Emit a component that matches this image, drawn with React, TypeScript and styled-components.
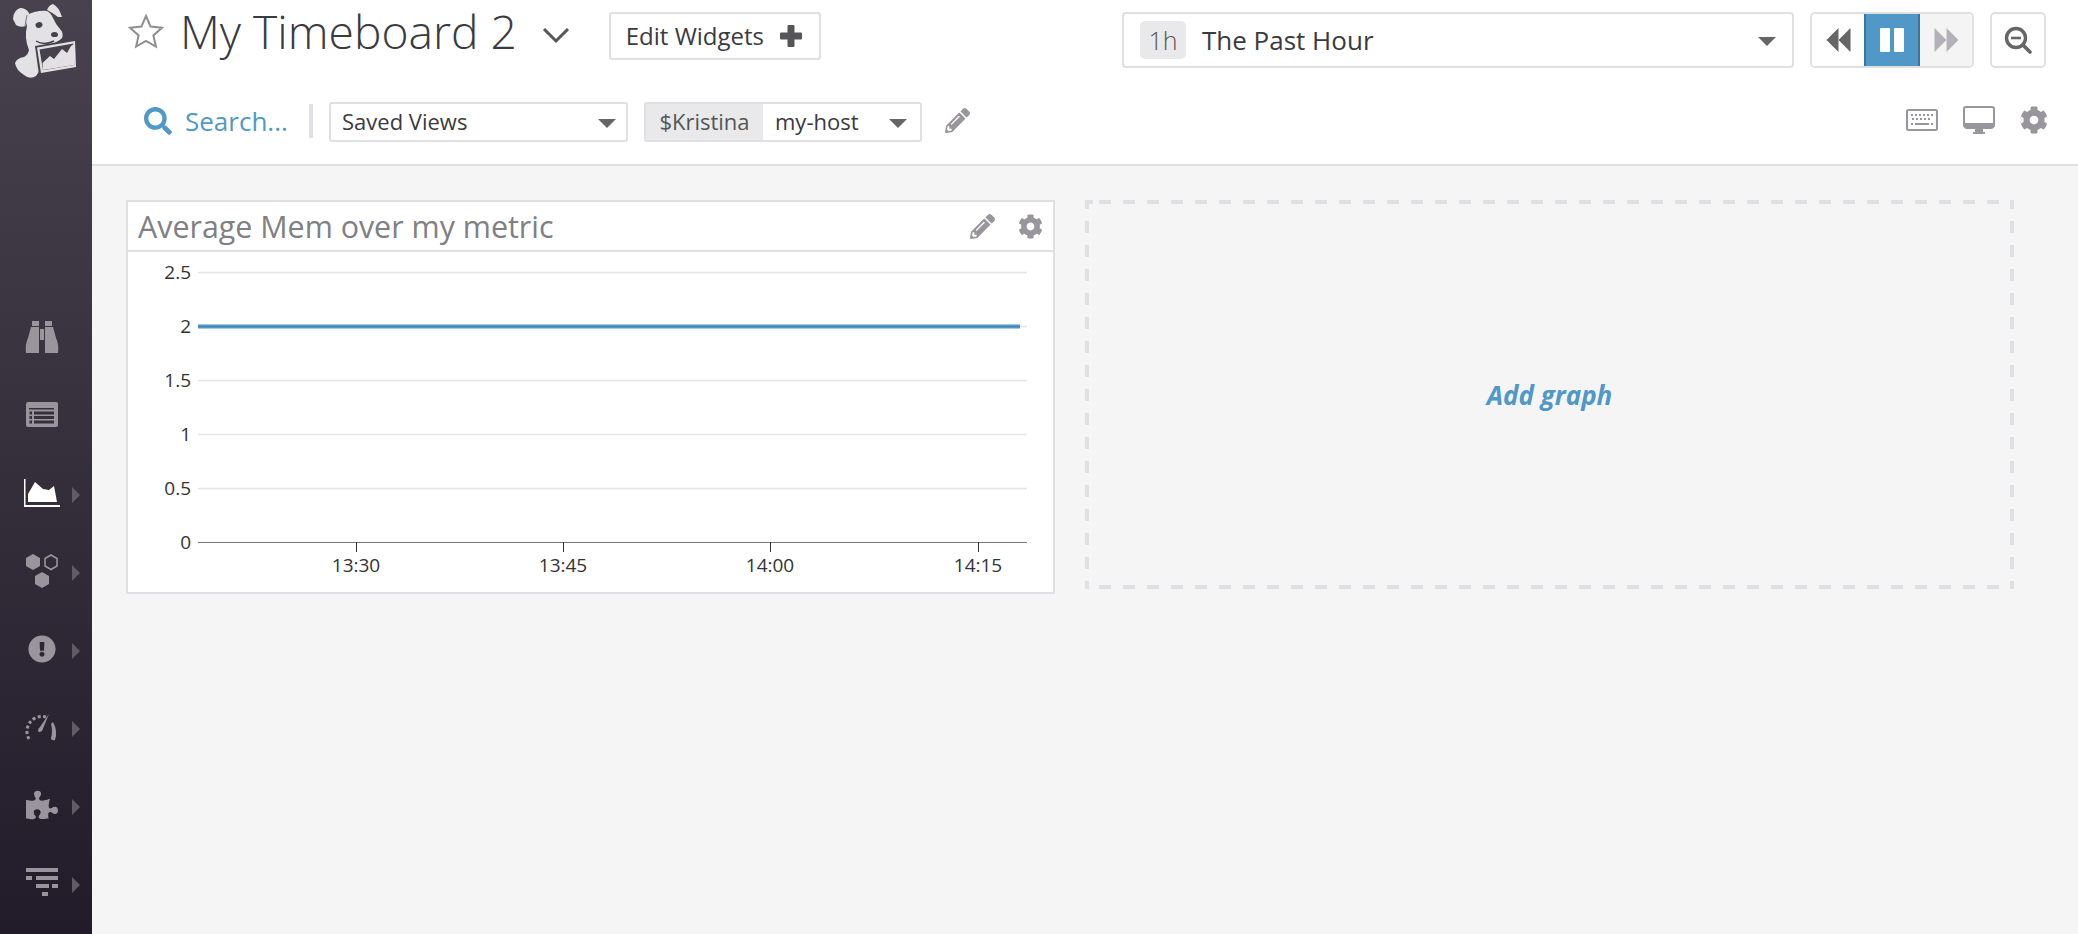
import { ReactNode } from 'react'
import styled, { createGlobalStyle } from 'styled-components'
import { FaCog, FaPencilAlt, FaPuzzlePiece, FaExclamationCircle, FaSearch } from 'react-icons/fa'

const BLUE = '#4f98c8'
const LINE = '#e0e0e4'

function DogLogo() {
  return (
    <svg width="92" height="100" viewBox="0 0 92 100">
      {/* head, chest and paw */}
      <path
        fill="#e2e2e4"
        d="M27 15 Q37 10 47 11 Q51 13 53 18 Q56 25 60 29 Q64 33 62 38 Q58 42 51 44 L37 48 L40 70 L36 76 Q30 80 24 75 Q16 70 15 63 Q17 58 24 57 Q28 55 29 50 Q24 38 27 26 Z"
      />
      {/* floppy ears */}
      <path fill="#e2e2e4" d="M13 19 Q13 11 20 8 Q26 8 29 13 Q28 20 26 26 Q20 28 16 25 Z" />
      <path fill="#e2e2e4" d="M47 10 Q49 5 53 4 Q59 7 62 17 L58 17 Q53 13 47 10 Z" />
      <path d="M27 15 L25 26" fill="none" stroke="#46414d" strokeWidth="0.7" />
      <ellipse cx="39" cy="25" rx="3.5" ry="2.8" fill="#46414d" transform="rotate(-20 39 25)" />
      <ellipse cx="54.5" cy="34.5" rx="3.5" ry="2.6" fill="#46414d" />
      <path d="M36 41 Q44 46 54 41" fill="none" stroke="#46414d" strokeWidth="1.4" />
      {/* the little chart it holds */}
      <path fill="#46414d" d="M35 46 L77 39 L78 69 L39 75 Z" />
      <path fill="#e2e2e4" d="M37 47.5 L75 41 L76 67 L41 73 Z" />
      <path fill="#46414d" d="M39.5 49.5 L73.5 43.5 L74.2 65 L43 70.2 Z" />
      <path fill="#e2e2e4" d="M43 70 L42.5 63 L50 56 L54 59 L62 49 L67 53 L71 46 L74 44 L74.2 65 Z" />
    </svg>
  )
}

const navIcons: { icon: ReactNode; arrow: boolean }[] = [
  {
    arrow: false,
    icon: (
      <svg width="34" height="34" viewBox="0 0 34 34" fill="#98969c">
        <rect x="7" y="1" width="7" height="5" />
        <rect x="20" y="1" width="7" height="5" />
        <path d="M6 7 H14 V33 H1 Q0 24 3 18 Z" />
        <path d="M20 7 H28 L31 18 Q34 24 33 33 H20 Z" />
        <rect x="15" y="9" width="4" height="11" />
      </svg>
    ),
  },
  {
    arrow: false,
    icon: (
      <svg width="34" height="28" viewBox="0 0 34 28">
        <rect x="1" y="1" width="32" height="25" rx="2" fill="#98969c" />
        <g fill="#36303e">
          <rect x="4" y="7" width="25" height="1.5" />
          <rect x="9" y="10.5" width="20" height="3" />
          <rect x="9" y="15" width="20" height="3" />
          <rect x="9" y="19.5" width="20" height="3" />
          <rect x="4.5" y="10.5" width="2.5" height="3" />
          <rect x="4.5" y="15" width="2.5" height="3" />
          <rect x="4.5" y="19.5" width="2.5" height="3" />
        </g>
      </svg>
    ),
  },
  {
    arrow: true,
    icon: (
      <svg width="38" height="30" viewBox="0 0 38 30" fill="#fff">
        <path d="M1 1 H2.5 V27 H37 V29 H1 Z" />
        <path d="M5 24 V16 L12 4 L20 11 L26 12 L31 8 L34 24 Z" />
      </svg>
    ),
  },
  {
    arrow: true,
    icon: (
      <svg width="34" height="34" viewBox="0 0 34 34" fill="#98969c">
        <path d="M8 0 L15 4 V12 L8 16 L1 12 V4 Z" />
        <path d="M17 18 L24 22 V30 L17 34 L10 30 V22 Z" />
        <path d="M26 1 L32 4.5 V12 L26 15.5 L20 12 V4.5 Z" fill="none" stroke="#98969c" strokeWidth="1.6" />
      </svg>
    ),
  },
  { arrow: true, icon: <FaExclamationCircle size={28} color="#98969c" /> },
  {
    arrow: true,
    icon: (
      <svg width="34" height="28" viewBox="0 0 34 28" fill="none">
        <path d="M4 26 A15 15 0 0 1 21 4" stroke="#98969c" strokeWidth="3" strokeDasharray="3 2.4" />
        <path d="M24 1 L17 18 Q14 20 13 18 Q13 15 15 14 Z" fill="#98969c" />
        <path d="M28 9 Q33 18 30 27 Q26 28 26 25 Q28 18 26 11 Z" fill="#98969c" />
      </svg>
    ),
  },
  { arrow: true, icon: <FaPuzzlePiece size={32} color="#98969c" /> },
  {
    arrow: true,
    icon: (
      <svg width="34" height="30" viewBox="0 0 34 30" fill="#98969c">
        <rect x="1" y="0" width="32" height="4" />
        <rect x="1" y="8" width="6" height="4" />
        <rect x="11" y="8" width="22" height="4" />
        <rect x="11" y="16" width="13" height="4" />
        <rect x="27" y="16" width="6" height="4" />
        <rect x="17" y="24" width="6" height="4" />
      </svg>
    ),
  },
]

function App() {
  return (
    <>
      <GlobalStyle />
      <Page>
        <Sidebar>
          <LogoBox>
            <DogLogo />
          </LogoBox>
          <Nav>
            {navIcons.map((item, i) => (
              <NavItem key={i}>
                <NavIcon>{item.icon}</NavIcon>
                {item.arrow && <NavArrow />}
              </NavItem>
            ))}
          </Nav>
        </Sidebar>
        <Main>
          <Header>
            <TopRow>
              <StarIcon width="38" height="36" viewBox="0 0 38 36">
                <path
                  d="M19 3 L23.6 13.6 L35 14.8 L26.4 22.4 L28.9 33.6 L19 27.8 L9.1 33.6 L11.6 22.4 L3 14.8 L14.4 13.6 Z"
                  fill="none"
                  stroke="#8e8e92"
                  strokeWidth="2"
                />
              </StarIcon>
              <Title>My Timeboard 2</Title>
              <TitleChevron width="28" height="18" viewBox="0 0 28 18">
                <path d="M2 3 L14 15 L26 3" fill="none" stroke="#55555a" strokeWidth="3" />
              </TitleChevron>
              <EditButton>
                <ButtonText>Edit Widgets</ButtonText>
                <svg width="22" height="22" viewBox="0 0 22 22" fill="#55555a">
                  <rect x="7.5" y="0" width="7" height="22" rx="1" />
                  <rect x="0" y="7.5" width="22" height="7" rx="1" />
                </svg>
              </EditButton>
              <TimeControls>
                <TimeSelect>
                  <TimeBadge>1h</TimeBadge>
                  <TimeLabel>The Past Hour</TimeLabel>
                  <Caret $size={8} />
                </TimeSelect>
                <Playback>
                  <PlayButton>
                    <svg width="27" height="26" viewBox="0 0 26 26" fill="#666">
                      <path d="M13 1 V25 L1 13 Z" />
                      <path d="M25 1 V25 L13 13 Z" />
                    </svg>
                  </PlayButton>
                  <PlayButton $active>
                    <svg width="26" height="26" viewBox="0 0 26 26" fill="#fff">
                      <rect x="1" y="1" width="10" height="24" rx="1" />
                      <rect x="15" y="1" width="10" height="24" rx="1" />
                    </svg>
                  </PlayButton>
                  <PlayButton $muted>
                    <svg width="27" height="26" viewBox="0 0 26 26" fill="#b4b2b8">
                      <path d="M1 1 V25 L13 13 Z" />
                      <path d="M13 1 V25 L25 13 Z" />
                    </svg>
                  </PlayButton>
                </Playback>
                <ZoomButton>
                  <svg width="28" height="28" viewBox="0 0 28 28" fill="none" stroke="#666">
                    <circle cx="12" cy="12" r="9.5" strokeWidth="3.4" />
                    <path d="M7 12 H17" strokeWidth="2.6" />
                    <path d="M19 19 L26 26" strokeWidth="3.6" strokeLinecap="round" />
                  </svg>
                </ZoomButton>
              </TimeControls>
            </TopRow>
            <BottomRow>
              <SearchLink>
                <FaSearch size={28} color={BLUE} />
                Search...
              </SearchLink>
              <Separator />
              <SavedViews>
                <ButtonText>Saved Views</ButtonText>
                <Caret $size={8} />
              </SavedViews>
              <VariableGroup>
                <VariableName>$Kristina</VariableName>
                <VariableValue>
                  <ButtonText>my-host</ButtonText>
                  <Caret $size={8} />
                </VariableValue>
              </VariableGroup>
              <PencilSlot>
                <FaPencilAlt size={25} color="#98969c" />
              </PencilSlot>
              <ViewIcons>
                <svg width="32" height="22" viewBox="0 0 32 22">
                  <rect x="1" y="1" width="30" height="20" rx="1.5" fill="#fff" stroke="#98969c" strokeWidth="2" />
                  <g fill="#98969c">
                    {[5, 9, 13, 17, 21, 25].map(x => (
                      <rect key={x} x={x} y="5" width="2" height="2" />
                    ))}
                    {[6, 10, 14, 18, 22].map(x => (
                      <rect key={x} x={x} y="9" width="2" height="2" />
                    ))}
                    <rect x="5" y="14" width="2" height="2" />
                    <rect x="9" y="14" width="14" height="2" />
                    <rect x="25" y="14" width="2" height="2" />
                  </g>
                </svg>
                <svg width="32" height="28" viewBox="0 0 32 28">
                  <rect x="1" y="1" width="30" height="20" rx="2" fill="#fff" stroke="#98969c" strokeWidth="2" />
                  <path d="M1 17 H31 V20 Q31 23 28 23 H4 Q1 23 1 20 Z" fill="#98969c" />
                  <path d="M12 23 H20 V26 H22 V28 H10 V26 H12 Z" fill="#98969c" />
                </svg>
                <FaCog size={28} color="#98969c" />
              </ViewIcons>
            </BottomRow>
          </Header>
          <Board>
            <Widget>
              <WidgetHeader>
                <WidgetTitle>Average Mem over my metric</WidgetTitle>
                <FaPencilAlt size={25} color="#98969c" />
                <FaCog size={25} color="#98969c" />
              </WidgetHeader>
              <Chart />
            </Widget>
            <AddGraph>Add graph</AddGraph>
          </Board>
        </Main>
      </Page>
    </>
  )
}

function Chart() {
  const yTicks = [
    { label: '2.5', y: 20 },
    { label: '2', y: 74 },
    { label: '1.5', y: 128 },
    { label: '1', y: 182 },
    { label: '0.5', y: 236 },
    { label: '0', y: 290 },
  ]
  const xTicks = [
    { label: '13:30', x: 228 },
    { label: '13:45', x: 435 },
    { label: '14:00', x: 642 },
    { label: '14:15', x: 850 },
  ]
  return (
    <ChartSvg width="925" height="340" viewBox="0 0 925 340">
      {yTicks.map(t => (
        <g key={t.label}>
          <line
            x1="70"
            x2="899"
            y1={t.y + 0.5}
            y2={t.y + 0.5}
            stroke={t.label === '0' ? '#777' : '#e4e4e6'}
            strokeWidth={t.label === '0' ? 1 : 1.5}
          />
          <text x="63" y={t.y + 7} textAnchor="end">
            {t.label}
          </text>
        </g>
      ))}
      <line x1="70" x2="892" y1="74.5" y2="74.5" stroke={BLUE} strokeWidth="4" />
      <line x1="70" x2="892" y1="74.5" y2="74.5" stroke="#3f85b4" strokeWidth="1" />
      {xTicks.map(t => (
        <g key={t.label}>
          <line x1={t.x + 0.5} x2={t.x + 0.5} y1="290" y2="300" stroke="#333" />
          <text x={t.x} y="320" textAnchor="middle">
            {t.label}
          </text>
        </g>
      ))}
    </ChartSvg>
  )
}

export default App

const GlobalStyle = createGlobalStyle`
  html, body {
    margin: 0;
    padding: 0;
    height: 100%;
    background: #f5f5f5;
    font-family: "Open Sans", "Liberation Sans", sans-serif;
  }
`

const Page = styled.div`
  display: flex;
  width: 2078px;
  height: 934px;
  overflow: hidden;
`

const Sidebar = styled.aside`
  width: 92px;
  flex-shrink: 0;
  display: flex;
  flex-direction: column;
  background: linear-gradient(180deg, #47424e 0%, #221c2a 100%);
`

const LogoBox = styled.div`
  height: 100px;
  line-height: 0;
`

const Nav = styled.nav`
  display: flex;
  flex-direction: column;
  margin-top: 200px;
`

const NavItem = styled.div`
  height: 78px;
  display: flex;
  align-items: center;
  position: relative;
`

const NavIcon = styled.div`
  width: 84px;
  display: flex;
  justify-content: center;
  margin-bottom: 4px;
`

const NavArrow = styled.span`
  position: absolute;
  left: 72px;
  width: 0;
  height: 0;
  border-left: 8px solid #5f5c66;
  border-top: 8px solid transparent;
  border-bottom: 8px solid transparent;
`

const Main = styled.main`
  flex: 1;
  display: flex;
  flex-direction: column;
  min-width: 0;
`

const Header = styled.header`
  height: 164px;
  background: #fff;
  border-bottom: 2px solid ${LINE};
`

const TopRow = styled.div`
  display: flex;
  align-items: flex-start;
  height: 102px;
  padding: 12px 32px 0 35px;
  box-sizing: border-box;
`

const StarIcon = styled.svg`
  margin: 1px 15px 0 0;
`

const Title = styled.h1`
  margin: 0;
  font-size: 46.2px;
  font-weight: 300;
  line-height: 40px;
  color: #3a3a40;
`

const TitleChevron = styled.svg`
  margin: 14px 0 0 25px;
`

const Box = styled.div`
  background: #fff;
  border: 2px solid ${LINE};
  border-radius: 3px;
  box-sizing: border-box;
`

const ButtonText = styled.span`
  margin-bottom: 2px;
`

const EditButton = styled(Box)`
  display: flex;
  align-items: center;
  justify-content: space-between;
  width: 212px;
  height: 48px;
  margin-left: 39px;
  padding: 0 17px 0 15px;
  font-size: 24px;
  color: #3a3a40;
`

const TimeControls = styled.div`
  margin-left: auto;
  display: flex;
  gap: 16px;
`

const TimeSelect = styled(Box)`
  width: 672px;
  height: 56px;
  display: flex;
  align-items: center;
  padding: 0 16px 0 16px;
  border-radius: 4px;
`

const TimeBadge = styled.span`
  width: 46px;
  height: 38px;
  display: flex;
  align-items: center;
  justify-content: center;
  background: #e9e9eb;
  border-radius: 5px;
  font-size: 25px;
  font-weight: 300;
  color: #555;
`

const TimeLabel = styled.span`
  margin-left: 16px;
  flex: 1;
  font-size: 26px;
  color: #3a3a40;
`

const Caret = styled.span<{ $size: number }>`
  width: 0;
  height: 0;
  margin-top: 2px;
  border-left: ${p => p.$size + 1}px solid transparent;
  border-right: ${p => p.$size + 1}px solid transparent;
  border-top: ${p => p.$size + 1}px solid #666;
`

const Playback = styled(Box)`
  display: flex;
  width: 164px;
  height: 56px;
  border-radius: 5px;
  overflow: hidden;
`

const PlayButton = styled.div<{ $active?: boolean; $muted?: boolean }>`
  flex: 1;
  margin: ${p => (p.$active ? '-2px 0' : '0')};
  display: flex;
  align-items: center;
  justify-content: center;
  box-sizing: border-box;
  background: ${p => (p.$active ? BLUE : p.$muted ? '#f4f4f5' : '#fff')};
  border: ${p => (p.$active ? '2px solid #3a77a0' : 'none')};
`

const ZoomButton = styled(Box)`
  width: 56px;
  height: 56px;
  display: flex;
  align-items: center;
  justify-content: center;
  border-radius: 5px;
`

const BottomRow = styled.div`
  display: flex;
  align-items: center;
  height: 40px;
  padding: 0 30px 0 52px;
`

const SearchLink = styled.div`
  display: flex;
  align-items: center;
  gap: 13px;
  width: 165px;
  margin-bottom: 3px;
  font-size: 26px;
  color: ${BLUE};
`

const Separator = styled.div`
  width: 4px;
  height: 34px;
  margin-bottom: 3px;
  background: ${LINE};
`

const SavedViews = styled(Box)`
  width: 299px;
  height: 40px;
  margin-left: 16px;
  display: flex;
  align-items: center;
  justify-content: space-between;
  padding: 0 10px 0 11px;
  font-size: 22px;
  color: #3a3a40;
`

const VariableGroup = styled(Box)`
  display: flex;
  width: 278px;
  height: 40px;
  margin-left: 16px;
  overflow: hidden;
`

const VariableName = styled.div`
  width: 117px;
  padding-bottom: 2px;
  box-sizing: border-box;
  display: flex;
  align-items: center;
  justify-content: center;
  background: #e9e9eb;
  font-size: 22px;
  color: #555;
`

const VariableValue = styled.div`
  flex: 1;
  display: flex;
  align-items: center;
  justify-content: space-between;
  padding: 0 13px 0 12px;
  font-size: 22px;
  color: #3a3a40;
`

const PencilSlot = styled.div`
  margin: 0 0 3px 23px;
  line-height: 0;
`

const ViewIcons = styled.div`
  margin: 0 0 4px auto;
  display: flex;
  align-items: center;
  gap: 25px;
`

const Board = styled.div`
  display: flex;
  align-items: flex-start;
  gap: 30px;
  padding: 34px 0 0 34px;
`

const Widget = styled.section`
  width: 929px;
  height: 394px;
  box-sizing: border-box;
  background: #fff;
  border: 2px solid ${LINE};
`

const WidgetHeader = styled.div`
  height: 48px;
  display: flex;
  align-items: center;
  gap: 23px;
  padding: 0 10px 0 10px;
  border-bottom: 2px solid ${LINE};
`

const WidgetTitle = styled.h2`
  flex: 1;
  margin: 0;
  font-size: 30.4px;
  font-weight: 400;
  color: #808084;
`

const ChartSvg = styled.svg`
  display: block;
  font-size: 19px;
  fill: #333;
`

const AddGraph = styled.div`
  width: 929px;
  height: 389px;
  display: flex;
  align-items: center;
  justify-content: center;
  font-size: 26px;
  font-weight: 700;
  font-style: italic;
  color: ${BLUE};
  background-image:
    linear-gradient(${LINE}, ${LINE}),
    repeating-linear-gradient(90deg, ${LINE} 0 2px, transparent 2px 14px, ${LINE} 14px 24px),
    repeating-linear-gradient(90deg, ${LINE} 0 2px, transparent 2px 14px, ${LINE} 14px 24px),
    repeating-linear-gradient(180deg, ${LINE} 0 9px, transparent 9px 21px, ${LINE} 21px 24px),
    repeating-linear-gradient(180deg, ${LINE} 0 9px, transparent 9px 21px, ${LINE} 21px 24px);
  background-size: 8px 4px, 100% 4px, 100% 4px, 4px 100%, 4px 100%;
  background-position: 0 0, 0 0, 0 100%, 0 0, 100% 0;
  background-repeat: no-repeat;
`
